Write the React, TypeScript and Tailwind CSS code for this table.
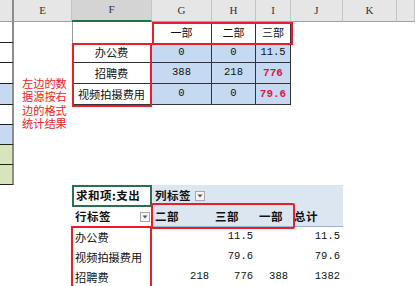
import React from 'react';

const cols = 'grid-cols-[14px_58px_80px_60px_44px_35px_52px_54px_18px]';
const cjk = "font-['Noto_Sans_CJK_SC',sans-serif]";
const mono = "font-['Liberation_Mono',monospace]";

function DropButton() {
  return (
    <span className="inline-flex w-[10px] h-[10px] items-center justify-center border border-[#a9a9a9] bg-[#f3f3f3]">
      <svg width="6" height="4" viewBox="0 0 6 4">
        <path d="M0.5 0.5 L5.5 0.5 L3 3.5 Z" fill="#555" />
      </svg>
    </span>
  );
}

export default function App() {
  const letters = ['', 'E', 'F', 'G', 'H', 'I', 'J', 'K', ''];

  // 左侧的源数据条带
  const strip = ['bg-white', 'bg-white', 'bg-white', 'bg-[#c5d9f0]', 'bg-white', 'bg-[#c5d9f0]', 'bg-[#d8e4bc]', 'bg-[#d8e4bc]'];

  const topRows = [
    { label: '办公费', vals: ['0', '0', '11.5'], red: false },
    { label: '招聘费', vals: ['388', '218', '776'], red: true },
    { label: '视频拍摄费用', vals: ['0', '0', '79.6'], red: true },
  ];

  const pivotRows = [
    { label: '办公费', vals: ['', '11.5', '', '11.5'] },
    { label: '视频拍摄费用', vals: ['', '79.6', '', '79.6'] },
    { label: '招聘费', vals: ['218', '776', '388', '1382'] },
  ];

  return (
    <div className={`relative w-[415px] h-[286px] overflow-hidden bg-white text-[#111] ${cjk}`}>
      {/* 列标题 */}
      <div className={`grid ${cols} h-[22px]`}>
        {letters.map((l, i) => (
          <div
            key={i}
            className={`flex items-end justify-center pb-[3px] text-[11px] text-[#333] font-['Liberation_Serif',serif] ${
              i === 0
                ? 'bg-[#e6e6e6] border-r-2 border-[#8c8c8c] border-b border-b-[#a0a0a0]'
                : i === 2
                ? 'bg-[#d4d4d4] border-r border-[#c4c4c4] border-b-2 border-b-[#217346]'
                : 'bg-[#e6e6e6] border-r border-[#c4c4c4] border-b border-b-[#a0a0a0]'
            }`}
          >
            {l}
          </div>
        ))}
      </div>

      <div className={`grid ${cols} grid-rows-[21px_20px_21px_21px_20px_20px_20px_20px_22px_20px_20px_20px_20px]`}>
        {strip.map((bg, i) => (
          <div
            key={i}
            className={`col-start-1 border-r-2 border-r-[#8c8c8c] border-b border-b-[#222] ${bg}`}
            style={{ gridRowStart: i + 1 }}
          />
        ))}

        {/* 说明文字 */}
        <div className="col-start-2 row-start-3 row-span-5 pl-[8px] pt-[14px] text-[11.2px] leading-[13.4px] text-[#ee1c25]">
          左边的数<br />据源按右<br />边的格式<br />统计结果
        </div>

        {/* 上方统计表 */}
        <div className="col-start-3 row-start-1 bg-white border-l border-[#9a9a9a]" />
        {['一部', '二部', '三部'].map((h, i) => (
          <div
            key={h}
            className="row-start-1 flex items-center justify-center text-[11px] border-r border-[#333]"
            style={{ gridColumnStart: i + 4 }}
          >
            {h}
          </div>
        ))}
        {topRows.map((r, ri) => (
          <React.Fragment key={r.label}>
            <div
              className="col-start-3 flex items-center justify-center text-[11.2px] border-b border-r border-[#333] bg-white"
              style={{ gridRowStart: ri + 2 }}
            >
              {r.label}
            </div>
            {r.vals.map((v, vi) => (
              <div
                key={vi}
                className={`flex items-center justify-center bg-[#c5d9f0] border-b border-r border-[#333] ${mono} ${
                  vi === 2 && r.red ? 'text-[#e0144f] font-bold text-[11px]' : 'text-[10.5px]'
                }`}
                style={{ gridRowStart: ri + 2, gridColumnStart: vi + 4 }}
              >
                {v}
              </div>
            ))}
          </React.Fragment>
        ))}

        {/* 数据透视表 */}
        <div className="col-start-3 row-start-9 flex items-center pl-[2px] border-2 border-[#2d6e4e] text-[11.5px] font-bold tracking-[0.5px]">
          求和项:支出
        </div>
        <div className="col-start-4 col-span-4 row-start-9 flex items-center gap-[4px] pl-[3px] bg-[#dce6f1] text-[11.5px] font-bold tracking-[0.5px]">
          列标签
          <DropButton />
        </div>
        <div className="col-start-3 row-start-10 flex items-center justify-between pl-[3px] pr-[2px] text-[11.5px] font-bold tracking-[0.5px]">
          行标签
          <DropButton />
        </div>
        {['二部', '三部', '一部', '总计'].map((h, i) => (
          <div
            key={h}
            className="row-start-10 flex items-center pl-[3px] bg-[#dce6f1] border-b border-[#95b3d7] text-[11.5px] font-bold tracking-[0.5px]"
            style={{ gridColumnStart: i + 4 }}
          >
            {h}
          </div>
        ))}
        {pivotRows.map((r, ri) => (
          <React.Fragment key={r.label}>
            <div
              className="col-start-3 flex items-center pl-[3px] text-[11.2px]"
              style={{ gridRowStart: ri + 11 }}
            >
              {r.label}
            </div>
            {r.vals.map((v, vi) => (
              <div
                key={vi}
                className={`flex items-center justify-end pr-[3px] text-[10.5px] ${mono}`}
                style={{ gridRowStart: ri + 11, gridColumnStart: vi + 4 }}
              >
                {v}
              </div>
            ))}
          </React.Fragment>
        ))}
      </div>

      {/* 红色标注框 */}
      <div className="absolute left-[72px] top-[43px] w-[80px] h-[64px] border-2 border-[#e5202a]" />
      <div className="absolute left-[152px] top-[22px] w-[141px] h-[23px] border-2 border-[#e5202a]" />
      <div className="absolute left-[151px] top-[203px] w-[144px] h-[26px] border-2 border-[#e5202a] rounded-[2px]" />
      <div className="absolute left-[71px] top-[226px] w-[81px] h-[80px] border-2 border-[#e5202a]" />
    </div>
  );
}
